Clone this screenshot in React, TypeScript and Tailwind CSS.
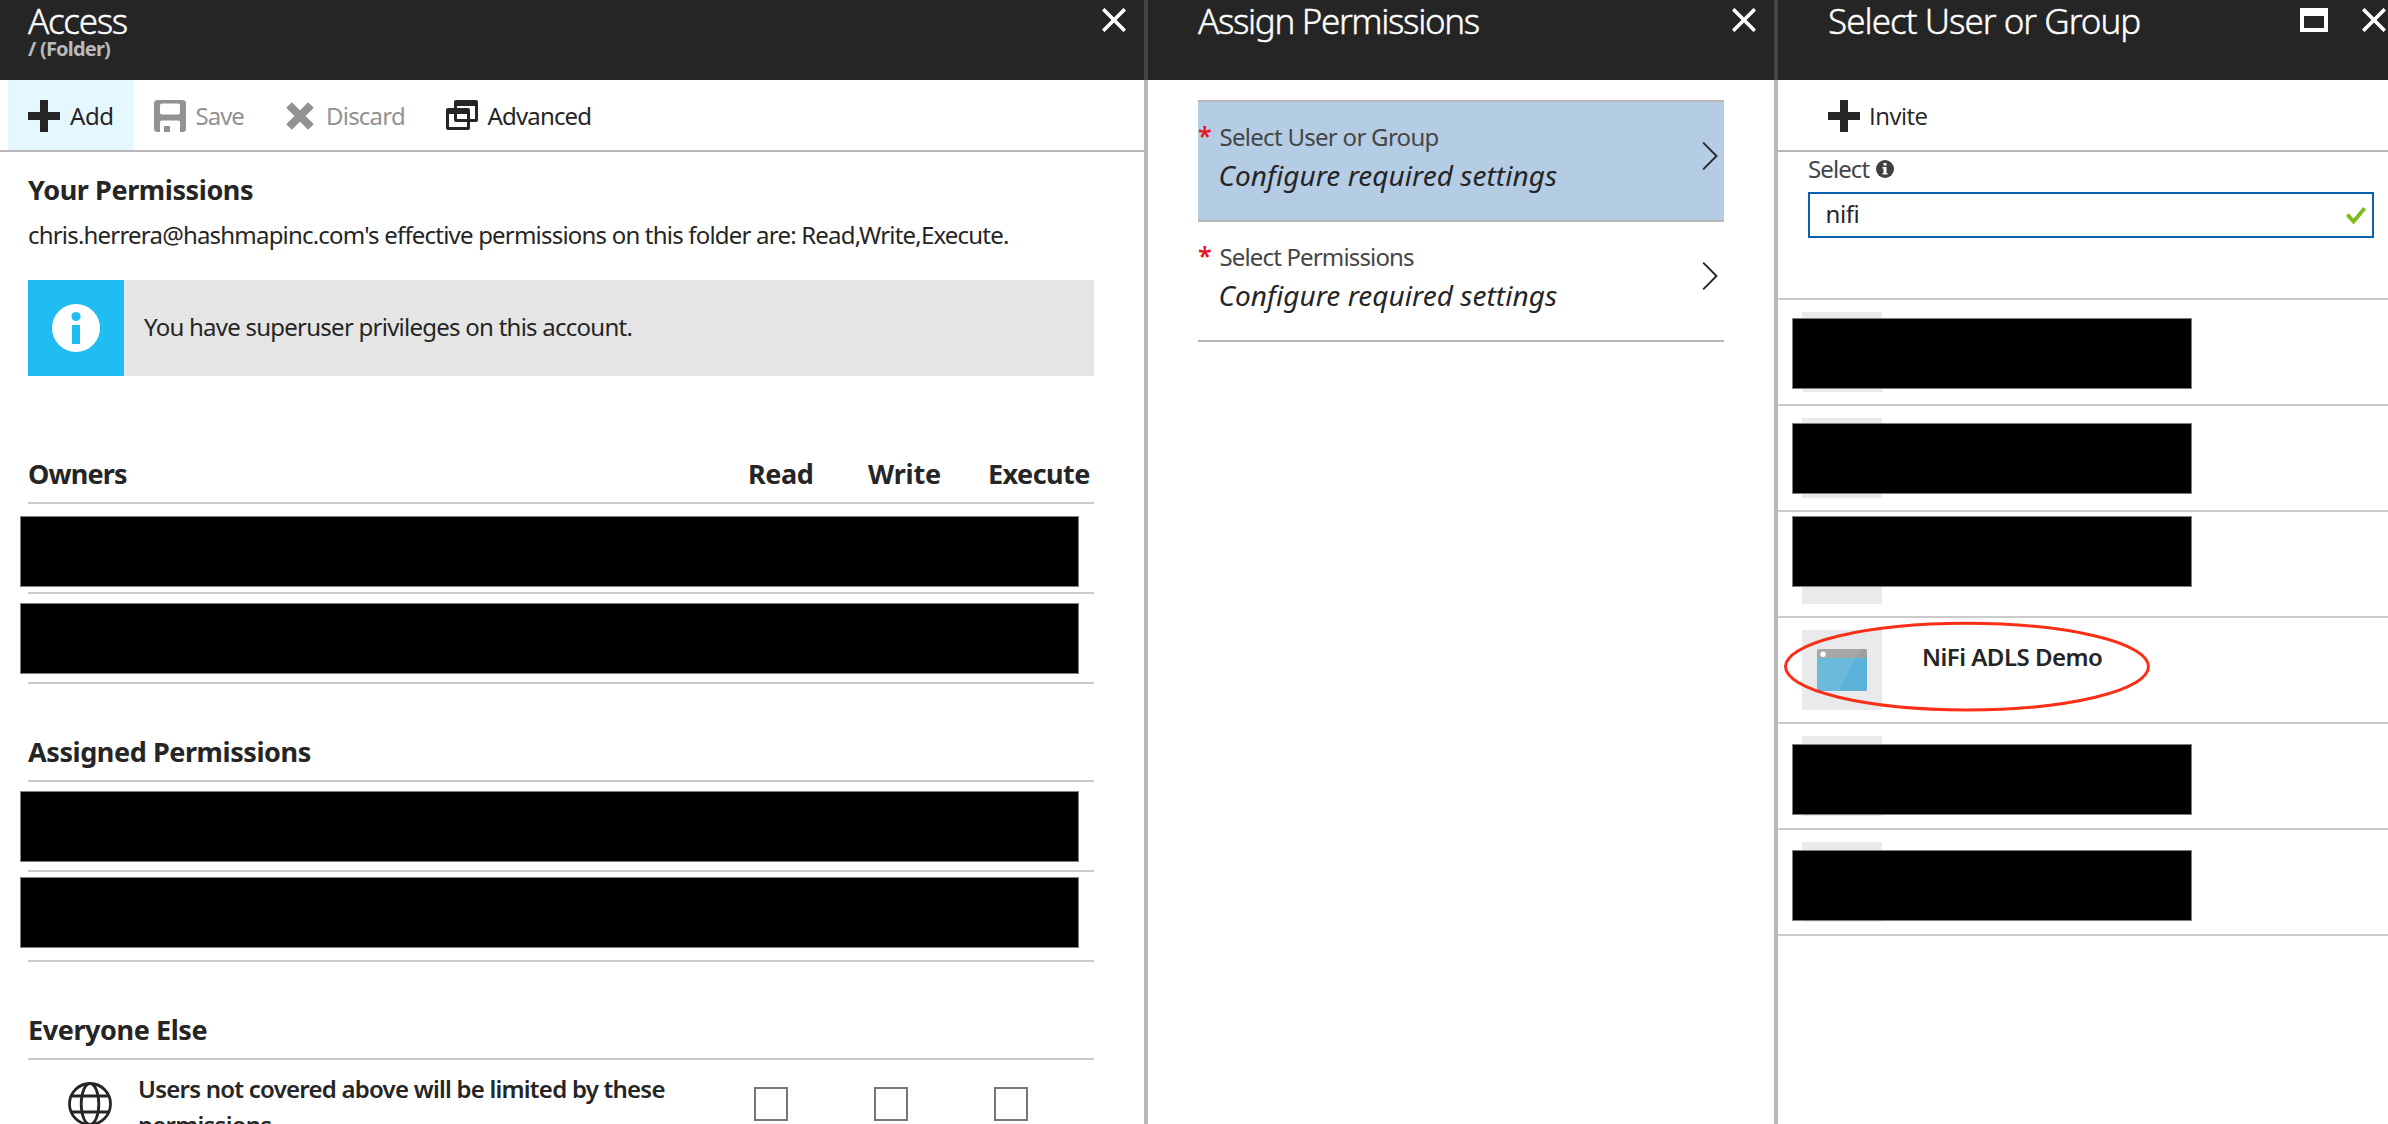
import React from "react";

const SANS = "[font-family:'Noto_Sans','Open_Sans',sans-serif]";

function CloseIcon() {
  return (
    <svg width="24" height="24" viewBox="0 0 24 24" fill="none" stroke="#fff" strokeWidth="3.6" className="shrink-0">
      <path d="M1.2 1.2 22.8 22.8M22.8 1.2 1.2 22.8" />
    </svg>
  );
}

function MaximizeIcon() {
  return (
    <svg width="28" height="24" viewBox="0 0 28 24" className="shrink-0">
      <path fill="#fff" fillRule="evenodd" d="M0 0H28V24H0ZM4 8V20H24V8Z" />
    </svg>
  );
}

function PlusIcon() {
  return (
    <svg width="32" height="32" viewBox="0 0 32 32" className="shrink-0">
      <path fill="#252525" d="M12 0h8v12h12v8H20v12h-8V20H0v-8h12z" />
    </svg>
  );
}

function SaveIcon() {
  return (
    <svg width="32" height="32" viewBox="0 0 32 32" className="shrink-0">
      <path
        fill="#929292"
        fillRule="evenodd"
        d="M3.5 0H28.5Q32 0 32 3.5V28.5Q32 32 28.5 32H26V22Q26 20.500 24.500 20.500H7.500Q6 20.500 6 22V32H3.500Q0 32 0 28.500V3.500Q0 0 3.500 0ZM8 3.500Q6 3.500 6 5.500V12.500Q6 14.500 8 14.500H24Q26 14.500 26 12.500V5.500Q26 3.500 24 3.500Z"
      />
      <rect x="10" y="26" width="6" height="6" fill="#929292" />
    </svg>
  );
}

function DiscardIcon() {
  return (
    <svg width="28" height="28" viewBox="0 0 28 28" fill="none" stroke="#929292" strokeWidth="8" className="shrink-0">
      <path d="M3 3 25 25M25 3 3 25" />
    </svg>
  );
}

function AdvancedIcon() {
  return (
    <svg width="32" height="32" viewBox="0 0 32 32" className="shrink-0">
      <g fill="#252525" fillRule="evenodd">
        <path d="M10 0H30Q32 0 32 2V20Q32 22 30 22H10Q8 22 8 20V2Q8 0 10 0ZM11 6V19H29V6Z" />
        <path d="M2 8H22Q24 8 24 10V28Q24 30 22 30H2Q0 30 0 28V10Q0 8 2 8ZM3 14V27H21V14Z" />
      </g>
    </svg>
  );
}

function GlobeIcon() {
  return (
    <svg width="44" height="44" viewBox="0 0 44 44" fill="none" stroke="#252525" strokeWidth="2.8" className="shrink-0">
      <circle cx="22" cy="22" r="20.500" />
      <ellipse cx="22" cy="22" rx="8.800" ry="20.500" />
      <path d="M3 14H41M3 30H41" />
    </svg>
  );
}

function ChevronIcon() {
  return (
    <svg width="16" height="28" viewBox="0 0 16 28" fill="none" stroke="#252525" strokeWidth="1.900" className="shrink-0">
      <path d="M1.200 .7 14.500 14 1.200 27.300" />
    </svg>
  );
}

function AppIcon() {
  return (
    <svg width="50" height="42" viewBox="0 0 50 42">
      <path fill="#a8a8a8" d="M2 0H48Q50 0 50 2V9.500H0V2Q0 0 2 0Z" />
      <path fill="#9f9f9f" d="M44 0H48Q50 0 50 2V9.500H40Z" />
      <path fill="#6bbadb" d="M0 9H50V40Q50 42 48 42H2Q0 42 0 40Z" />
      <path fill="#5cb2d8" d="M38.500 9H50V40Q50 42 48 42H22Z" />
      <circle cx="6" cy="5.200" r="2.700" fill="#fff" />
    </svg>
  );
}

function Redacted({ className }: { className: string }) {
  return <div className={`h-[71px] border border-[#7f7f7f] bg-black ${className}`} />;
}

function BladeTitle({ children, className }: { children: React.ReactNode; className: string }) {
  return (
    <h1
      className={`text-[35px] leading-[41px] font-light whitespace-nowrap text-white [-webkit-text-stroke:0.4px_#fff] ${className}`}
    >
      {children}
    </h1>
  );
}

function SectionTitle({ children, className }: { children: React.ReactNode; className: string }) {
  return <h2 className={`text-[27px] leading-[37px] font-bold whitespace-nowrap ${className}`}>{children}</h2>;
}

function AccessBlade() {
  return (
    <section className="flex w-[1144px] shrink-0 flex-col">
      <header className="flex h-20 shrink-0 justify-between bg-[#252525] pr-[18px] pl-7">
        <div>
          <BladeTitle className="tracking-[-1.31px]">Access</BladeTitle>
          <p className="-mt-[3px] text-[20px] leading-[21px] font-bold tracking-[-0.8px] text-[#b9b9b9]">/ (Folder)</p>
        </div>
        <div className="pt-2">
          <CloseIcon />
        </div>
      </header>

      <nav className="flex h-[72px] shrink-0 border-b-2 border-[#b8b8b8] pl-2 text-[24px] leading-[33px] whitespace-nowrap">
        <div className="flex w-[126px] bg-[#e5f7ff] pt-5 pl-5">
          <PlusIcon />
          <span className="-mt-px ml-[10px] tracking-[-0.45px]">Add</span>
        </div>
        <div className="flex w-[132px] pt-5 pl-5 text-[#929292]">
          <SaveIcon />
          <span className="-mt-px ml-[9.5px] tracking-[-1px]">Save</span>
        </div>
        <div className="flex w-40 pt-5 pl-5 text-[#929292]">
          <div className="pt-[2px]">
            <DiscardIcon />
          </div>
          <span className="-mt-px ml-3 tracking-[-0.78px]">Discard</span>
        </div>
        <div className="flex pt-5 pl-5">
          <AdvancedIcon />
          <span className="-mt-px ml-[9.5px] tracking-[-0.83px]">Advanced</span>
        </div>
      </nav>

      <div className="flex flex-col pt-[19px] pr-[50px] pl-7">
        <SectionTitle className="tracking-[-0.4px]">Your Permissions</SectionTitle>
        <p className="mt-[10px] text-[24px] leading-[33px] tracking-[-0.8px] whitespace-nowrap">
          chris.herrera@hashmapinc.com's effective permissions on this folder are: Read,Write,Execute.
        </p>
        <div className="mt-[29px] flex h-24 bg-[#e5e5e5]">
          <div className="flex w-24 items-center justify-center bg-[#20bdf2]">
            <svg width="48" height="48" viewBox="0 0 48 48">
              <circle cx="24" cy="24" r="24" fill="#fff" />
              <circle cx="24" cy="12.500" r="4.600" fill="#20bdf2" />
              <rect x="20" y="21" width="8" height="19" fill="#20bdf2" />
            </svg>
          </div>
          <p className="pt-[30px] pl-5 text-[24px] leading-[33px] tracking-[-0.75px] whitespace-nowrap">
            You have superuser privileges on this account.
          </p>
        </div>

        <div className="mt-[79px] flex h-[49px] border-b-2 border-[#cbcbcb]">
          <SectionTitle className="w-[720px] tracking-[-0.84px]">Owners</SectionTitle>
          <SectionTitle className="w-[120px] tracking-[-0.4px]">Read</SectionTitle>
          <SectionTitle className="w-[120px] tracking-[-0.17px]">Write</SectionTitle>
          <SectionTitle className="tracking-[-0.55px]">Execute</SectionTitle>
        </div>
        <div className="h-[90px] border-b-2 border-[#cbcbcb] pt-3">
          <Redacted className="-ml-2 w-[1059px]" />
        </div>
        <div className="h-[90px] border-b-2 border-[#cbcbcb] pt-[9px]">
          <Redacted className="-ml-2 w-[1059px]" />
        </div>

        <div className="mt-[49px] h-[49px] border-b-2 border-[#cbcbcb]">
          <SectionTitle className="tracking-[-0.42px]">Assigned Permissions</SectionTitle>
        </div>
        <div className="h-[90px] border-b-2 border-[#cbcbcb] pt-[9px]">
          <Redacted className="-ml-2 w-[1059px]" />
        </div>
        <div className="h-[90px] border-b-2 border-[#cbcbcb] pt-[5px]">
          <Redacted className="-ml-2 w-[1059px]" />
        </div>

        <div className="mt-[49px] h-[49px] border-b-2 border-[#cbcbcb]">
          <SectionTitle className="tracking-[-0.42px]">Everyone Else</SectionTitle>
        </div>
        <div className="flex">
          <div className="pt-[22px] pl-10">
            <GlobeIcon />
          </div>
          <p className="ml-[26px] w-[610px] pt-[11px] text-[24px] leading-[36px] font-semibold tracking-[-0.76px]">
            Users not covered above will be limited by these
            <br />
            permissions.
          </p>
          <div className="flex gap-[86px] pt-[27px] pl-[6px]">
            <div className="size-[34px] border-2 border-[#777]" />
            <div className="size-[34px] border-2 border-[#777]" />
            <div className="size-[34px] border-2 border-[#777]" />
          </div>
        </div>
      </div>
    </section>
  );
}

function SettingRow({ label, className, labelClass }: { label: string; className: string; labelClass: string }) {
  return (
    <div className={`flex h-[120px] border-b-2 border-[#b8b8b8] pr-[6px] ${className}`}>
      <span className="w-[21.5px] shrink-0 pt-[17px] text-[25px] leading-[33px] font-semibold text-[#e81123]">*</span>
      <div className="grow pt-[18px] whitespace-nowrap">
        <div className={`text-[24px] leading-[33px] text-[#464646] ${labelClass}`}>{label}</div>
        <div className="mt-[3px] -ml-px text-[28px] leading-[38px] tracking-[0.04px] italic">
          Configure required settings
        </div>
      </div>
      <div className="pt-10">
        <ChevronIcon />
      </div>
    </div>
  );
}

function AssignBlade() {
  return (
    <section className="flex w-[626px] shrink-0 flex-col">
      <header className="flex h-20 shrink-0 justify-between bg-[#252525] pr-[18px] pl-[50px]">
        <BladeTitle className="tracking-[-1.36px]">Assign Permissions</BladeTitle>
        <div className="pt-2">
          <CloseIcon />
        </div>
      </header>
      <div className="mt-5 mr-[50px] ml-[50px] border-t-2 border-[#b8b8b8]">
        <SettingRow label="Select User or Group" className="bg-[#b4cce4]" labelClass="tracking-[-0.71px]" />
        <SettingRow label="Select Permissions" className="" labelClass="tracking-[-0.85px]" />
      </div>
    </section>
  );
}

const results: { name?: string; mask?: string }[] = [
  { mask: "top-[18px]" },
  { mask: "top-[17px]" },
  { mask: "top-[4px]" },
  { name: "NiFi ADLS Demo" },
  { mask: "top-[20px]" },
  { mask: "top-[20px]" },
];

function SelectBlade() {
  return (
    <section className="flex w-[610px] shrink-0 flex-col">
      <header className="flex h-20 shrink-0 justify-between bg-[#252525] pr-[2px] pl-[50px]">
        <BladeTitle className="tracking-[-0.98px]">Select User or Group</BladeTitle>
        <div className="flex gap-[34px] pt-2">
          <MaximizeIcon />
          <CloseIcon />
        </div>
      </header>
      <nav className="flex h-[72px] shrink-0 border-b-2 border-[#b8b8b8] pt-5 pl-[50px]">
        <PlusIcon />
        <span className="-mt-px ml-[9px] [font-family:'Open_Sans',sans-serif] text-[24px] leading-[33px] tracking-[-0.5px]">
          Invite
        </span>
      </nav>
      <div className="h-[148px] shrink-0 border-b-2 border-[#cbcbcb] pr-[14px] pl-[30px]">
        <div className="flex">
          <label className="w-[68px] text-[24px] leading-[33px] tracking-[-0.9px] text-[#464646]">Select</label>
          <svg width="18" height="18" viewBox="0 0 18 18" className="mt-2">
            <circle cx="9" cy="9" r="9" fill="#404040" />
            <path fill="#fff" d="M7.500 3h3v2.500h-3zM6.500 7h4v6h1v1.500h-5V13h1V8.500h-1z" />
          </svg>
        </div>
        <div className="mt-[7px] flex h-[46px] justify-between border-2 border-[#0f5fb0] pr-[6px] pl-[15.5px]">
          <span className="pt-[3px] text-[24px] leading-[33px] tracking-[-0.41px]">nifi</span>
          <svg width="20" height="18" viewBox="0 0 20 18" fill="none" stroke="#7fb91e" strokeWidth="3.800" className="mt-[13px]">
            <path d="M1.300 7.500 7.600 14.500 18.600 1.200" />
          </svg>
        </div>
      </div>
      {results.map((r, i) => (
        <div key={i} className="relative flex h-[106px] shrink-0 border-b-2 border-[#cbcbcb] pt-3 pl-6">
          <div className="flex h-20 w-20 bg-[#e8eaeb] pt-[19px] pl-[15px]">{r.name && <AppIcon />}</div>
          {r.name && (
            <span className="mt-[10px] ml-10 text-[24px] leading-[33px] font-semibold tracking-[-0.51px] whitespace-nowrap">
              {r.name}
            </span>
          )}
          {r.mask && <Redacted className={`absolute left-[14px] w-[400px] ${r.mask}`} />}
          {r.name && (
            <svg width="368" height="92" viewBox="0 0 368 92" className="absolute top-[3px] left-[5px]">
              <ellipse cx="184" cy="45.600" rx="181.500" ry="43.300" fill="none" stroke="#fb2f18" strokeWidth="3" />
            </svg>
          )}
        </div>
      ))}
    </section>
  );
}

function Divider() {
  return (
    <div className="flex w-1 shrink-0 flex-col">
      <div className="h-20 bg-[#444]" />
      <div className="grow bg-[#b8b8b8]" />
    </div>
  );
}

export default function App() {
  return (
    <div className={`flex h-[1124px] w-[2388px] overflow-hidden bg-white text-[#252525] ${SANS}`}>
      <AccessBlade />
      <Divider />
      <AssignBlade />
      <Divider />
      <SelectBlade />
    </div>
  );
}
